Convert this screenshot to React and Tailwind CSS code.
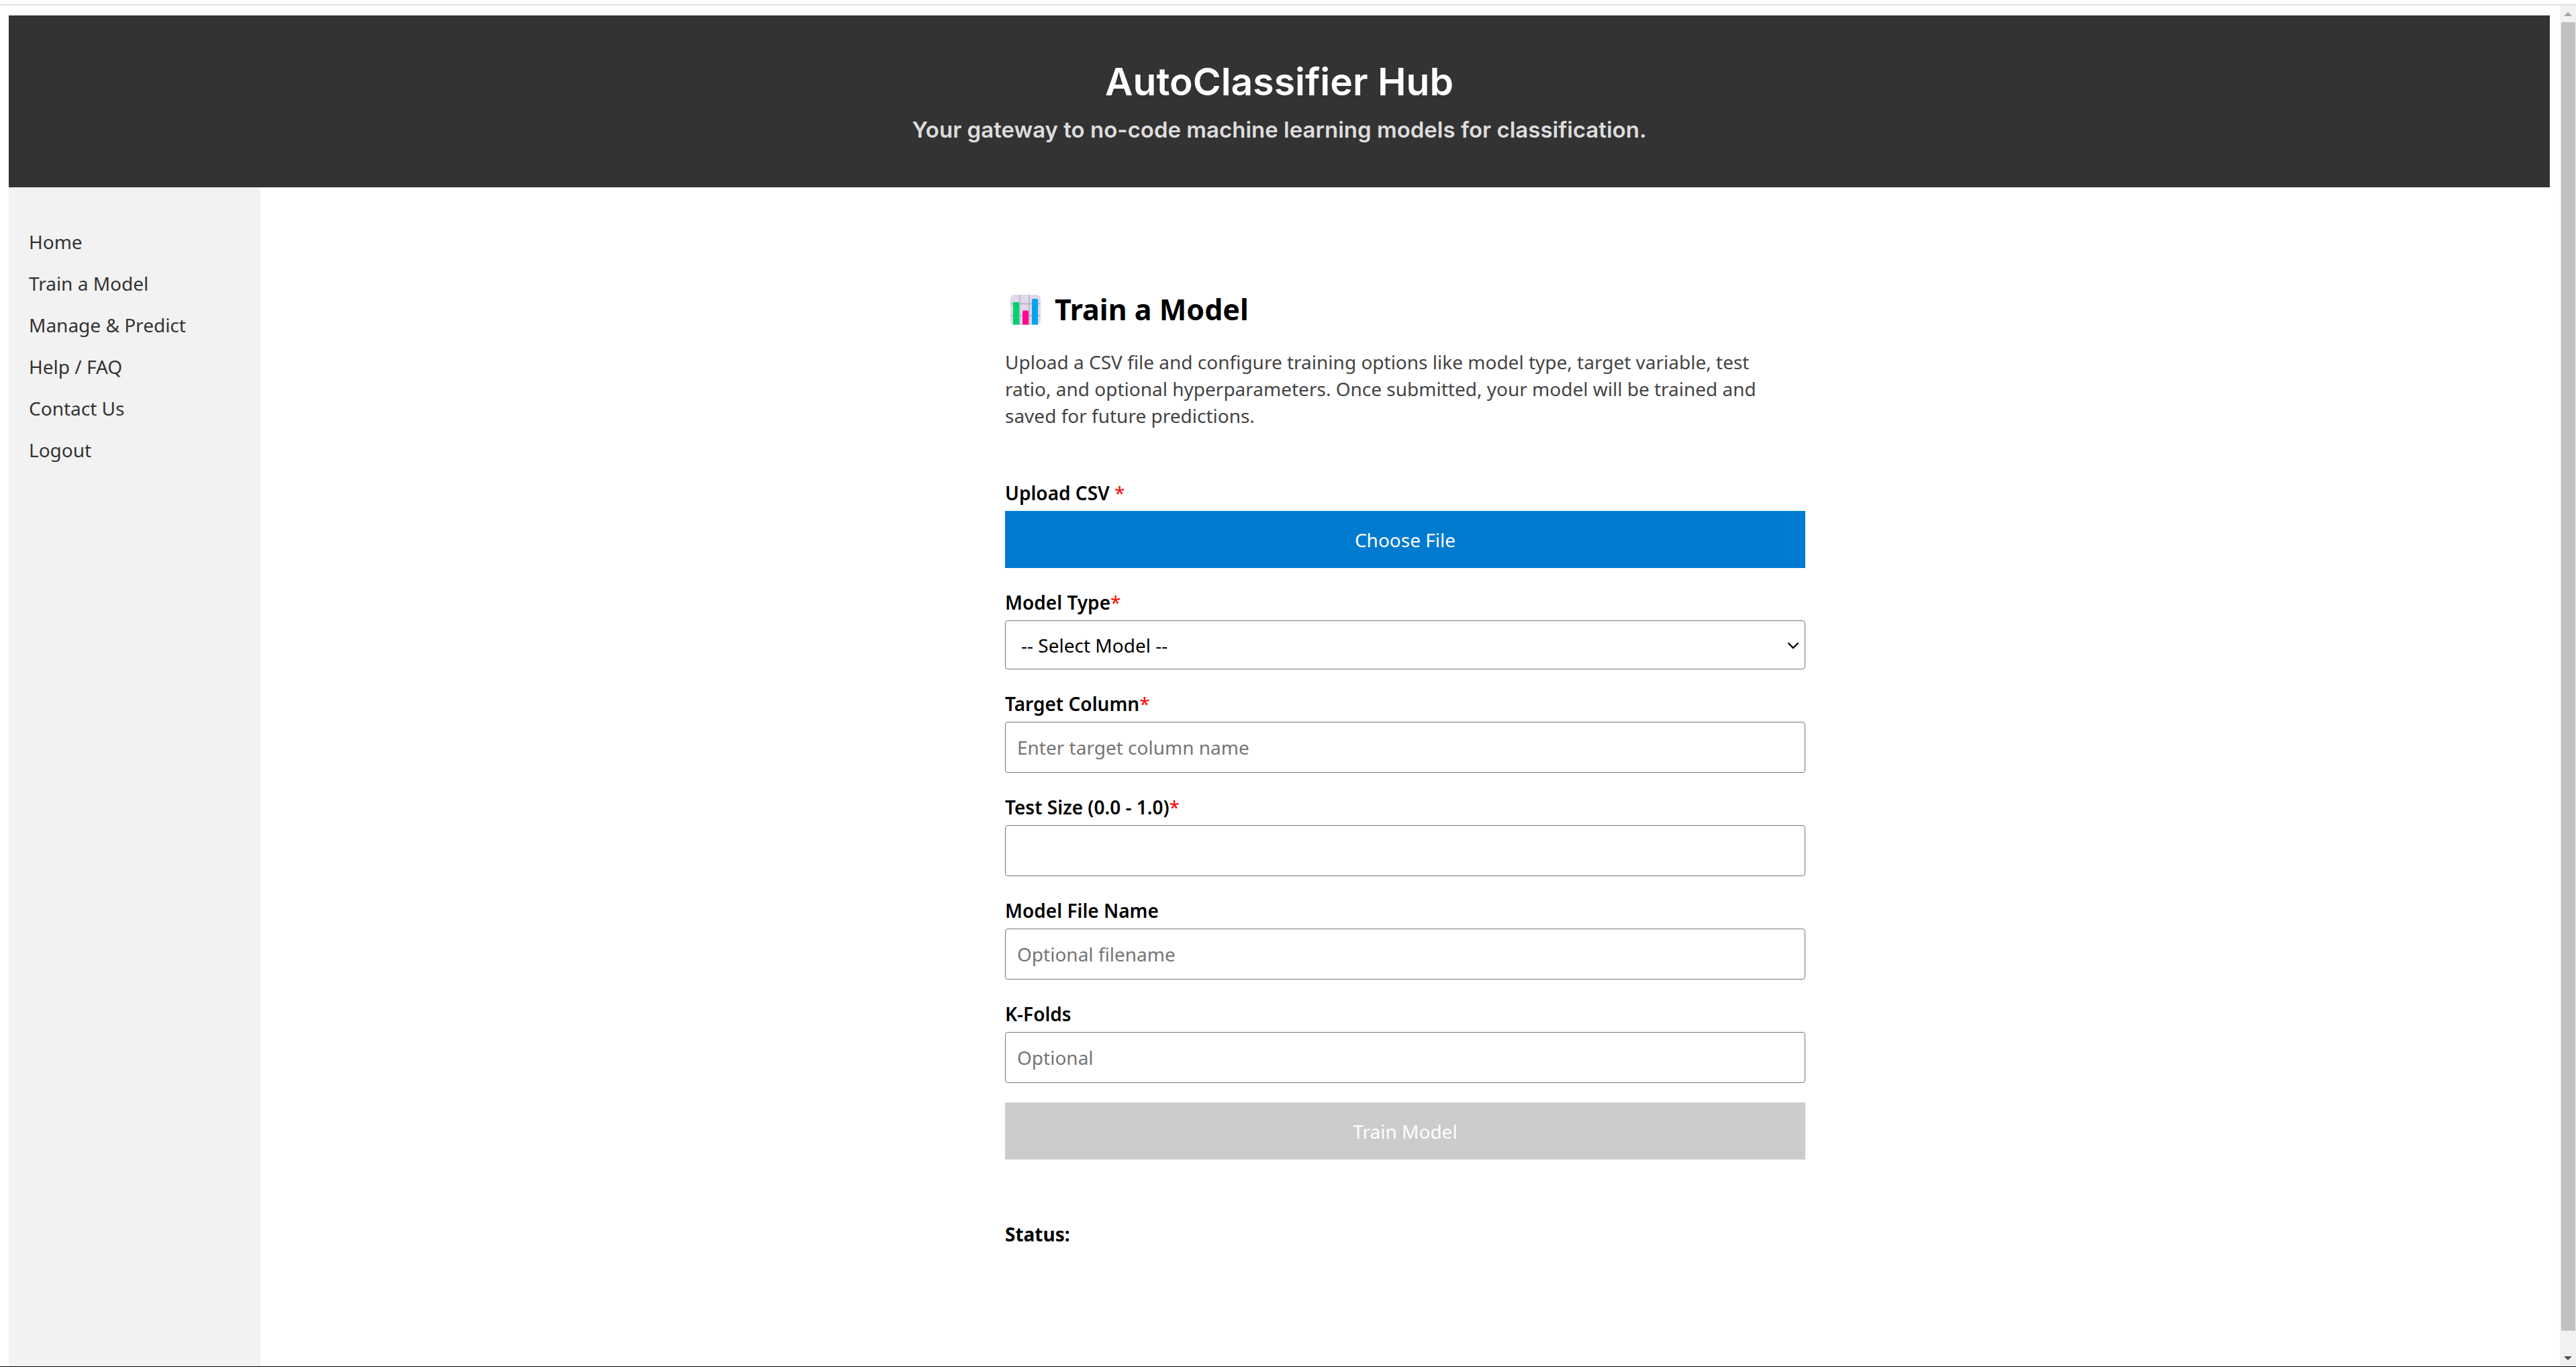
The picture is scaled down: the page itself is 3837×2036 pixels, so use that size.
import React from "react";

const NAV = ["Home", "Train a Model", "Manage & Predict", "Help / FAQ", "Contact Us", "Logout"];

function Required() {
  return <span className="font-normal text-[#ff0000]">*</span>;
}

function Field({ id, label, required, children }) {
  return (
    <div className="flex flex-col gap-[7px]">
      <label htmlFor={id} className="font-semibold">
        {label}
        {required && <Required />}
      </label>
      {children}
    </div>
  );
}

function TextField({ id, label, required, placeholder }) {
  return (
    <Field id={id} label={label} required={required}>
      <input
        id={id}
        type="text"
        placeholder={placeholder}
        className="h-[76px] w-full rounded-[4px] border border-[#767676] bg-white px-[17px] placeholder:text-[#757575]"
      />
    </Field>
  );
}

function ChartIcon() {
  return (
    <svg aria-hidden="true" viewBox="0 0 45 45" className="size-[45px] shrink-0">
      <rect width="45" height="45" rx="6" fill="#e1d8ec" />
      <path d="M14 0v45M28 0v45M0 13.5h45M0 31h45" stroke="#b4acbc" strokeWidth="1.4" fill="none" />
      <path d="M4 44.500V12.500a1.500 1.500 0 0 1 1.500-1.500h6a1.500 1.500 0 0 1 1.500 1.500v32z" fill="#00d26a" />
      <path d="M18 44.500V25a1.500 1.500 0 0 1 1.500-1.500h6A1.500 1.500 0 0 1 27 25v19.500z" fill="#ff0a8c" />
      <path d="M32 44.500V7.500A1.500 1.500 0 0 1 33.500 6h6A1.500 1.500 0 0 1 41 7.500v37z" fill="#00a6ed" />
    </svg>
  );
}

function ScrollTrack() {
  return (
    <div aria-hidden="true" className="flex w-6 shrink-0 flex-col items-center bg-[#f1f1f1]">
      <svg viewBox="0 0 12 6" className="mt-[10px] mb-[9px] h-[6px] w-3">
        <path d="M0 6L6 0l6 6z" fill="#a3a3a3" />
      </svg>
      <div className="w-[21px] grow bg-[#c1c1c1]" />
      <svg viewBox="0 0 12 6" className="mt-[38px] mb-[9px] h-[6px] w-3">
        <path d="M0 0h12L6 6z" fill="#505050" />
      </svg>
    </div>
  );
}

export default function App() {
  return (
    <div className="flex min-h-screen flex-col border-b border-black bg-white font-['Noto_Sans','Open_Sans',sans-serif] text-[28px] leading-[40px] text-black">
      <div className="mt-[6px] h-[2px] bg-[#e1e1e1]" />
      <div className="flex grow">
        <div className="mt-[15px] mr-[15px] ml-[13px] flex grow flex-col">
          <header className="flex flex-col items-center gap-3 bg-[#333333] pt-[66px] pb-[60px] font-['Inter',sans-serif] text-center">
            <h1 className="text-[57px] leading-[66px] font-semibold text-white">AutoClassifier Hub</h1>
            <p className="text-[33px] leading-[52px] font-semibold text-[#dddddd]">
              Your gateway to no-code machine learning models for classification.
            </p>
          </header>
          <div className="flex grow">
            <nav className="w-[375px] shrink-0 bg-[#f2f2f2] px-[30px] pt-[61px]">
              <ul className="flex flex-col gap-[22px]">
                {NAV.map((item) => (
                  <li key={item} className="flex">
                    <a href="#" className="text-[#333333]">
                      {item}
                    </a>
                  </li>
                ))}
              </ul>
            </nav>
            <main className="flex grow flex-col items-center">
              <div className="w-full max-w-[1192px] pt-[152px] pb-20">
                <h2 className="flex items-center gap-[21px] pl-2 text-[43px] leading-[60px] font-bold">
                  <ChartIcon />
                  Train a Model
                </h2>
                <p className="mt-[28px] max-w-[1150px] text-[#444444]">
                  Upload a CSV file and configure training options like model type, target variable, test ratio, and
                  optional hyperparameters. Once submitted, your model will be trained and saved for future
                  predictions.
                </p>
                <form className="mt-[75px]" onSubmit={(e) => e.preventDefault()}>
                  <div className="flex flex-col gap-[31px]">
                    <Field id="csv" label="Upload CSV " required>
                      <button id="csv" type="button" className="h-[85px] w-full bg-[#007bd0] text-white">
                        Choose File
                      </button>
                    </Field>
                    <Field id="model" label="Model Type" required>
                      <div className="relative">
                        <select
                          id="model"
                          className="block h-[73px] w-full appearance-none rounded-[4px] border border-[#767676] bg-white px-[23px]"
                        >
                          <option>-- Select Model --</option>
                        </select>
                        <svg
                          aria-hidden="true"
                          viewBox="0 0 18 11"
                          className="pointer-events-none absolute top-[32px] right-[9px] h-[11px] w-[18px]"
                        >
                          <path d="M1.500 1.500L9 9l7.500-7.500" fill="none" stroke="#000" strokeWidth="2.400" />
                        </svg>
                      </div>
                    </Field>
                    <TextField id="target" label="Target Column" required placeholder="Enter target column name" />
                    <TextField id="test-size" label="Test Size (0.0 - 1.0)" required />
                    <TextField id="filename" label="Model File Name" placeholder="Optional filename" />
                    <TextField id="folds" label="K-Folds" placeholder="Optional" />
                  </div>
                  <button type="submit" disabled className="mt-[29px] block h-[85px] w-full bg-[#cccccc] text-white">
                    Train Model
                  </button>
                </form>
                <h3 className="mt-[91px] font-bold">Status:</h3>
              </div>
            </main>
          </div>
        </div>
        <ScrollTrack />
      </div>
    </div>
  );
}
